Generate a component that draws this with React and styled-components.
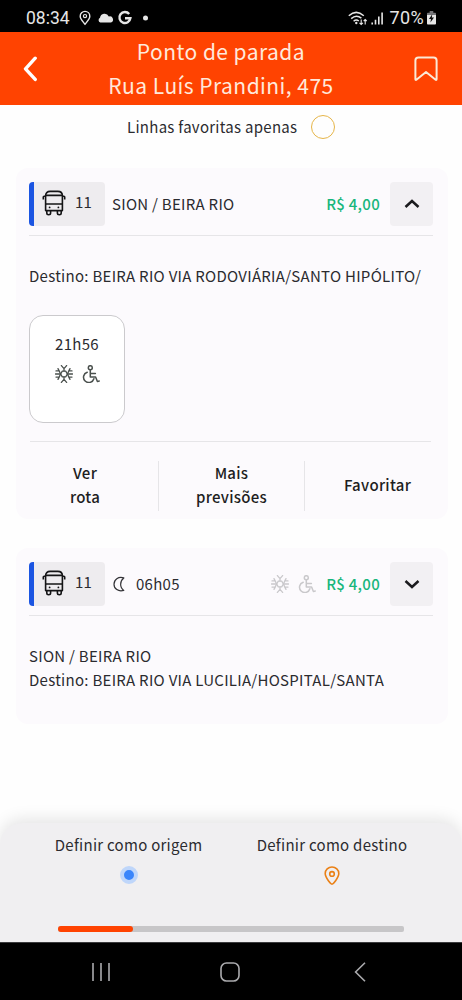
import React from 'react'
import styled, { createGlobalStyle } from 'styled-components'

const lines = [
    {
        id: 1,
        number: '11',
        name: 'SION / BEIRA RIO',
        price: 'R$ 4,00',
        destination: 'Destino: BEIRA RIO VIA RODOVIÁRIA/SANTO HIPÓLITO/',
        time: '21h56',
        isOpen: true
    },
    {
        id: 2,
        number: '11',
        name: 'SION / BEIRA RIO',
        price: 'R$ 4,00',
        destination: 'Destino: BEIRA RIO VIA LUCILIA/HOSPITAL/SANTA',
        time: '06h05',
        isOpen: false
    }
]

function BusIcon() {
    return (
        <svg width="24" height="26" viewBox="0 0 24 26" fill="none" stroke="#141416" strokeWidth="1.6" strokeLinejoin="round">
            <path d="M3.6 20.6V5.8Q3.6 1.4 8.2 1.4H15.8Q20.4 1.4 20.4 5.8V20.6Z" />
            <path d="M4 5.4H20M3.6 14H20.4" />
            <path d="M3.4 6.2H2.2Q1.3 6.2 1.3 7V9.6M20.6 6.2H21.8Q22.7 6.2 22.7 7V9.6" />
            <path d="M4.8 20.8V23Q4.8 24.7 6.7 24.7T8.6 23V20.8M15.4 20.8V23Q15.4 24.7 17.3 24.7T19.2 23V20.8" />
            <circle cx="7.6" cy="17.4" r=".9" fill="#141416" stroke="none" />
            <circle cx="16.4" cy="17.4" r=".9" fill="#141416" stroke="none" />
        </svg>
    )
}

function SnowIcon() {
    return (
        <svg width="18" height="18" viewBox="0 0 18 18" fill="none" stroke="currentColor" strokeWidth="1.3" strokeLinecap="round" strokeLinejoin="round">
            <path d="M7.3 6.1H10.7L12.4 9L10.7 11.9H7.3L5.6 9Z" />
            <path d="M.4 9H5.6M12.4 9H17.6" />
            <path d="M1 5.9H4.2L5.6 9L4.2 12.1H1M4.2 5.9L3 3.6M4.2 12.1L3 14.4" />
            <path d="M17 5.9H13.8L12.4 9L13.8 12.1H17M13.8 5.9L15 3.6M13.8 12.1L15 14.4" />
            <path d="M6.4 .6L9 3.6L11.6 .6M9 3.6V6M6.4 17.4L9 14.4L11.6 17.4M9 14.4V12" />
        </svg>
    )
}

function WheelchairIcon() {
    return (
        <svg width="18" height="18" viewBox="0 0 18 18" fill="none" stroke="currentColor" strokeWidth="1.5" strokeLinecap="round" strokeLinejoin="round">
            <circle cx="8.3" cy="2.7" r="2" />
            <path d="M8.3 4.8V12H13.6L15.4 16.6L17.2 16M8.5 8.4H13.4" />
            <path d="M5.2 7.2A5.3 5.3 0 1 0 11.9 13.8" />
        </svg>
    )
}

function LineBadge({ number }) {
    return (
        <StBadge>
            <BusIcon />
            <StNumber>{number}</StNumber>
        </StBadge>
    )
}

function LineCard({ line }) {
    return (
        <StCard $open={line.isOpen}>
            <StCard_header>
                <LineBadge number={line.number} />
                {line.isOpen ? (
                    <StLine_name>{line.name}</StLine_name>
                ) : (
                    <StNext_time>
                        <svg width="12" height="16" viewBox="0 0 12 16" fill="none" stroke="#333337" strokeWidth="1.2" strokeLinejoin="round">
                            <path d="M10.8 1.9C5.2 .3 1 3.6 1 8.2S5.2 15.9 10.8 14.4C6.6 11.6 6.6 5 10.8 1.9Z" />
                        </svg>
                        {line.time}
                        <StFaded_icons>
                            <SnowIcon />
                            <WheelchairIcon />
                        </StFaded_icons>
                    </StNext_time>
                )}
                <StPrice>{line.price}</StPrice>
                <StToggle_button>
                    <svg width="16" height="10" viewBox="0 0 16 10" fill="none" stroke="#1b1b1e" strokeWidth="2.5">
                        <path d={line.isOpen ? 'M1.5 8L8 2L14.5 8' : 'M1.5 2L8 8L14.5 2'} />
                    </svg>
                </StToggle_button>
            </StCard_header>
            <StDescription>
                {!line.isOpen && <div>{line.name}</div>}
                <div>{line.destination}</div>
            </StDescription>
            {line.isOpen && (
                <>
                    <StTime_box>
                        {line.time}
                        <StIcons>
                            <SnowIcon />
                            <WheelchairIcon />
                        </StIcons>
                    </StTime_box>
                    <StActions>
                        <StAction>Ver<br />rota</StAction>
                        <StAction>Mais<br />previsões</StAction>
                        <StAction>Favoritar</StAction>
                    </StActions>
                </>
            )}
        </StCard>
    )
}

function StatusBar() {
    return (
        <StStatus>
            <StClock>08:34</StClock>
            <svg width="70" height="16" viewBox="0 0 70 16" fill="none">
                <path d="M6 14.2C3.4 11 1.2 9 1.2 6.2A4.8 4.8 0 0 1 10.8 6.2C10.8 9 8.6 11 6 14.2Z" stroke="#e6e6e6" strokeWidth="1.4" />
                <circle cx="6" cy="6.1" r="1.6" stroke="#e6e6e6" strokeWidth="1.2" />
                <path d="M21.3 12.6A2.7 2.7 0 0 1 21 7.7A4.6 4.6 0 0 1 29.8 6.5A3.2 3.2 0 0 1 31.8 12.6Z" fill="#e6e6e6" />
                <path d="M50.2 4A5.5 5.5 0 1 0 51.4 8.2H46" stroke="#e6e6e6" strokeWidth="2.4" />
                <circle cx="66.5" cy="8" r="2.5" fill="#e6e6e6" />
            </svg>
            <StStatus_right>
                <svg width="36" height="15" viewBox="0 0 36 15" fill="none" stroke="#e6e6e6" strokeWidth="1.5">
                    <path d="M.8 4.8Q8.2 -2 15.8 4.8M3.2 7.6Q8.2 3.2 13.4 7.2M5.6 10.2Q8.2 8 10.8 10" />
                    <circle cx="8.3" cy="12" r="1.2" fill="#e6e6e6" stroke="none" />
                    <path d="M13.2 8.5V13.5M11.5 11.8L13.2 13.5L14.9 11.8M17.2 13.5V8.5M15.7 10L17.2 8.5L18.7 10" strokeWidth="1.1" />
                    <path d="M24.2 11.5V13.5M27.5 8.7V13.5M30.8 5.5V13.5M34.1 1.5V13.5" strokeWidth="1.6" />
                </svg>
                <StPercent>70%</StPercent>
                <svg width="9" height="14" viewBox="0 0 10 14" preserveAspectRatio="none">
                    <path d="M3 0H7V1.8H9Q10 1.8 10 2.8V4H0V2.8Q0 1.8 1 1.8H3Z" fill="#77777a" />
                    <path d="M0 4H10V12.4Q10 13.4 9 13.4H1Q0 13.4 0 12.4Z" fill="#e6e6e6" />
                    <path d="M5.8 3.2L2.2 8H4.4L3.8 11.4L7.8 6.5H5.4Z" fill="#111" />
                </svg>
            </StStatus_right>
        </StStatus>
    )
}

function App() {
    return (
        <StPhone>
            <GlobalStyle />
            <StatusBar />
            <StHeader>
                <svg width="16" height="26" viewBox="0 0 16 26" fill="none" stroke="#fff" strokeWidth="3.4" strokeLinecap="round" strokeLinejoin="round">
                    <path d="M12.2 2.2L2.5 12.8L12.2 23.4" />
                </svg>
                <StTitle>
                    Ponto de parada
                    <br />
                    Rua Luís Prandini, 475
                </StTitle>
                <svg width="24" height="26" viewBox="0 0 24 26" fill="none" stroke="#fbe9d6" strokeWidth="2" strokeLinejoin="round">
                    <path d="M1.4 23V4.5Q1.4 1.4 4.5 1.4H19.5Q22.6 1.4 22.6 4.5V23Q22.6 24.6 21.3 23.5L12 16L2.7 23.5Q1.4 24.6 1.4 23Z" />
                </svg>
            </StHeader>
            <StFilter>
                Linhas favoritas apenas
                <StRadio />
            </StFilter>
            <StList>
                {lines.map((line) => (
                    <LineCard key={line.id} line={line} />
                ))}
            </StList>
            <StSheet>
                <StChoices>
                    <StChoice $width="147px">
                        Definir como origem
                        <StDot />
                    </StChoice>
                    <StChoice $width="150px">
                        Definir como destino
                        <svg width="16" height="20" viewBox="0 0 16 20" fill="none" stroke="#ea8016" strokeWidth="1.6">
                            <path d="M8 18.2C7 18.2 6.2 17.3 5.2 15.8C3 12.6 1.2 10.6 1.2 7.6A6.8 6.6 0 0 1 14.8 7.6C14.8 10.6 13 12.6 10.8 15.8C9.8 17.3 9 18.2 8 18.2Z" />
                            <circle cx="8" cy="7.9" r="2.3" />
                        </svg>
                    </StChoice>
                </StChoices>
                <StTrack>
                    <StProgress />
                </StTrack>
            </StSheet>
            <StNav>
                <svg width="20" height="20" viewBox="0 0 20 20" stroke="#aaaaad" strokeWidth="1.6">
                    <path d="M2 1V19M10 1V19M18 1V19" />
                </svg>
                <StHome_icon width="20" height="20" viewBox="0 0 20 20" fill="none" stroke="#aaaaad" strokeWidth="1.6">
                    <rect x="1" y="1" width="18" height="18" rx="5.5" />
                </StHome_icon>
                <svg width="12" height="20" viewBox="0 0 12 20" fill="none" stroke="#aaaaad" strokeWidth="1.6">
                    <path d="M11 .8L1.6 10L11 19.2" />
                </svg>
            </StNav>
        </StPhone>
    )
}

export default App


const GlobalStyle = createGlobalStyle`
    * {
        box-sizing: border-box;
    }
    body {
        margin: 0;
        background-color: #ffffff;
    }
    svg {
        display: block;
        flex: none;
    }
`

const StPhone = styled.div`
    width: 462px;
    height: 1000px;
    display: flex;
    flex-direction: column;
    overflow: hidden;
    background-color: #fefefe;
    color: #2b2b2f;
    font-family: "Noto Sans CJK SC", sans-serif;
    font-size: 15px;
    line-height: 24px;
    letter-spacing: 0.28px;
`

const StStatus = styled.div`
    height: 32px;
    padding: 4px 26px 0;
    display: flex;
    align-items: center;
    background-color: #000000;
    color: #e6e6e6;
    font-family: Roboto, sans-serif;
    font-size: 17.5px;
    letter-spacing: 0;
`

const StClock = styled.span`
    width: 53px;
`

const StStatus_right = styled.div`
    margin-left: auto;
    display: flex;
    align-items: center;
`

const StPercent = styled.span`
    margin: 0 3px 0 5px;
    font-size: 18px;
    letter-spacing: 0.4px;
`

const StHeader = styled.header`
    height: 73px;
    padding: 0 24px 0 23px;
    display: flex;
    align-items: center;
    justify-content: space-between;
    background-color: #ff4301;
    color: #ffe9db;
`

const StTitle = styled.h1`
    margin: 0;
    padding: 0 11px 1px 0;
    font-size: 21px;
    font-weight: 400;
    line-height: 34px;
    letter-spacing: 0.46px;
    text-align: center;
`

const StFilter = styled.div`
    height: 63px;
    padding: 10px 0 0 127px;
    display: flex;
    align-items: flex-start;
    gap: 14px;
`

const StRadio = styled.div`
    width: 24px;
    height: 24px;
    border: 1.5px solid #e6b548;
    border-radius: 50%;
`

const StList = styled.main`
    flex: 1;
    padding: 0 14px 0 16px;
    display: flex;
    flex-direction: column;
    gap: 29px;
`

const StCard = styled.section`
    height: ${(props) => (props.$open ? '351px' : '176px')};
    padding: 14px 15px 0 13px;
    border-radius: 12px;
    background-color: #fcfafd;
`

const StCard_header = styled.div`
    height: 54px;
    display: flex;
    align-items: flex-start;
    border-bottom: 1px solid #e6e5e8;
    line-height: 44px;
`

const StBadge = styled.div`
    width: 76px;
    height: 44px;
    padding: 0 0 2px 8px;
    display: flex;
    align-items: center;
    gap: 9px;
    border-left: 5px solid #1b55e2;
    border-radius: 4px;
    background-color: #eeecef;
`

const StNumber = styled.span`
    margin-bottom: 3px;
    line-height: 38px;
`

const StLine_name = styled.div`
    flex: 1;
    padding-left: 7px;
`

const StNext_time = styled.div`
    flex: 1;
    padding-left: 8px;
    display: flex;
    align-items: center;
    gap: 11px;
`

const StIcons = styled.div`
    display: flex;
    gap: 9px;
    color: #4a504d;
`

const StFaded_icons = styled(StIcons)`
    margin: 0 10px 0 auto;
    color: #c9c8cb;
`

const StPrice = styled.div`
    color: #17b67c;
    font-weight: 500;
`

const StToggle_button = styled.button`
    width: 43px;
    height: 44px;
    margin-left: 10px;
    padding: 0;
    display: flex;
    align-items: center;
    justify-content: center;
    border: none;
    border-radius: 4px;
    background-color: #f2f0f3;
`

const StDescription = styled.div`
    margin-top: 28px;
    white-space: nowrap;
`

const StTime_box = styled.div`
    width: 96px;
    height: 108px;
    margin-top: 27px;
    padding-top: 16px;
    display: flex;
    flex-direction: column;
    align-items: center;
    gap: 9px;
    border: 1px solid #cbcacd;
    border-radius: 14px;
    background-color: #ffffff;
`

const StActions = styled.div`
    width: 401px;
    margin-top: 18px;
    margin-left: 1px;
    padding-top: 19px;
    display: flex;
    border-top: 1px solid #e6e5e8;
`

const StAction = styled.div`
    flex: none;
    width: 146px;
    height: 50px;
    padding-bottom: 2px;
    display: flex;
    align-items: center;
    justify-content: center;
    text-align: center;
    color: #1e1e22;
    font-weight: 500;

    &:first-child {
        width: 128px;
        padding-right: 18px;
    }

    & + & {
        border-left: 1px solid #e6e5e8;
    }
`

const StSheet = styled.footer`
    height: 119px;
    padding-top: 10px;
    border-radius: 22px 22px 0 0;
    background-color: #f0eff1;
    box-shadow: 0 -4px 16px rgba(0, 0, 0, 0.1);
`

const StChoices = styled.div`
    padding: 0 55px;
    display: flex;
    justify-content: space-between;
`

const StChoice = styled.div`
    width: ${(props) => props.$width};
    display: flex;
    flex-direction: column;
    align-items: center;
    gap: 9px;
    white-space: nowrap;
`

const StDot = styled.div`
    width: 18px;
    height: 18px;
    border: 4px solid #bfd6fa;
    border-radius: 50%;
    background-color: #3a85fb;
`

const StTrack = styled.div`
    width: 346px;
    height: 6px;
    margin: 40px 0 0 58px;
    border-radius: 2px;
    background-color: #c7c6c8;
`

const StProgress = styled.div`
    width: 75px;
    height: 6px;
    border-radius: 3px;
    background-color: #ff4301;
`

const StNav = styled.nav`
    height: 58px;
    padding: 0 96px 0 91px;
    display: flex;
    align-items: center;
    justify-content: space-between;
    border-top: 1px solid #3b3b3d;
    background-color: #000000;
`

const StHome_icon = styled.svg`
    margin-right: 5px;
`
